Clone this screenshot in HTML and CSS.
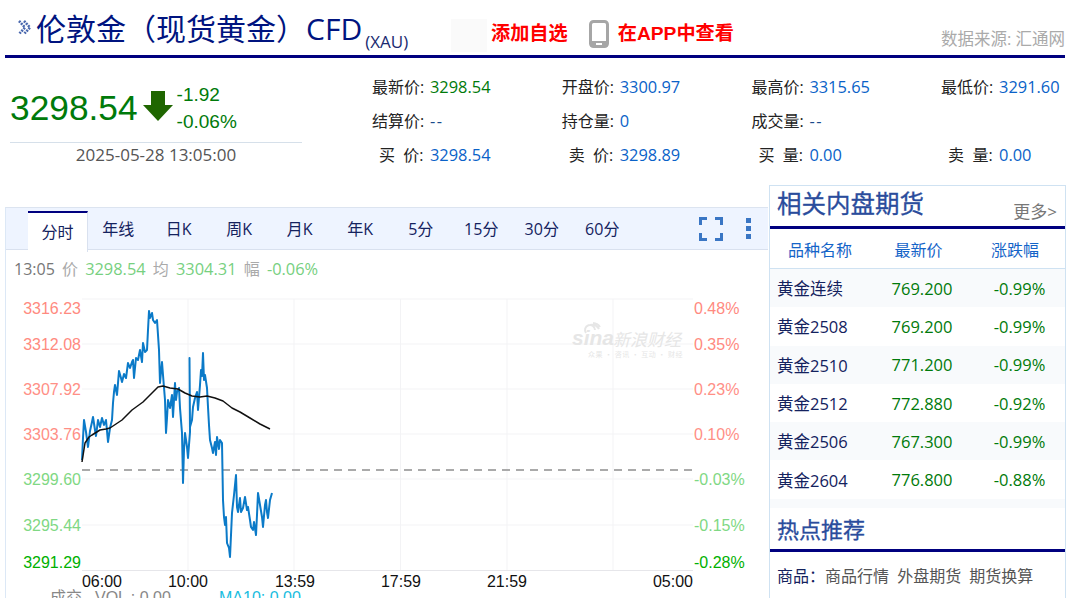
FILE: index.html
```html
<!doctype html>
<html>
<head>
<meta charset="utf-8">
<title>伦敦金（现货黄金）CFD</title>
<link rel="stylesheet" href="styles.css">
</head>
<body>
<div class="page">
    <div class="head">
        <svg class="head-mark" width="15" height="15" viewBox="0 0 15 15">
            <path d="M1 1l6 6.500l-6 6.500M6 1l6 6.500l-6 6.500" fill="none" stroke="#4a68ae" stroke-width="2.600" stroke-dasharray="2 1"/>
        </svg>
        <h1>伦敦金（现货黄金）CFD<small>(XAU)</small></h1>
        <div class="head-blank"></div>
        <a class="head-link">添加自选</a>
        <svg class="head-phone" width="20" height="28" viewBox="0 0 20 28">
            <rect x="1.500" y="1.500" width="17" height="25" rx="3" fill="#fff" stroke="#a6a6a6" stroke-width="3"/>
            <rect x="1" y="21" width="18" height="6" rx="2" fill="#a6a6a6"/>
            <rect x="7" y="23" width="6" height="2" fill="#fff"/>
        </svg>
        <a class="head-link">在APP中查看</a>
        <span class="head-source">数据来源: 汇通网</span>
    </div>

    <div class="quote">
        <div class="hero">
            <div class="hero-top">
                <span class="hero-price">3298.54</span>
                <svg class="hero-arrow" width="32" height="32" viewBox="0 0 32 32">
                    <path d="M9 1h14v14h8L16 31L1 15h8z" fill="#1f6600"/>
                </svg>
                <div class="hero-change">
                    <div>-1.92</div>
                    <div>-0.06%</div>
                </div>
            </div>
            <div class="hero-time">2025-05-28 13:05:00</div>
        </div>
        <div class="fields">
            <div class="field"><label>最新价:</label><b class="green">3298.54</b></div>
            <div class="field"><label>开盘价:</label><b>3300.97</b></div>
            <div class="field"><label>最高价:</label><b>3315.65</b></div>
            <div class="field"><label>最低价:</label><b>3291.60</b></div>
            <div class="field"><label>结算价:</label><b class="dash">--</b></div>
            <div class="field"><label>持仓量:</label><b>0</b></div>
            <div class="field"><label>成交量:</label><b class="dash">--</b></div>
            <div class="field"></div>
            <div class="field"><label class="wide">买&nbsp;&nbsp;价:</label><b>3298.54</b></div>
            <div class="field"><label class="wide">卖&nbsp;&nbsp;价:</label><b>3298.89</b></div>
            <div class="field"><label class="wide">买&nbsp;&nbsp;量:</label><b>0.00</b></div>
            <div class="field"><label class="wide">卖&nbsp;&nbsp;量:</label><b>0.00</b></div>
        </div>
    </div>

    <div class="main">
        <div class="chart-panel">
            <div class="tabs">
                <a class="tab on">分时</a>
                <a class="tab">年线</a>
                <a class="tab">日K</a>
                <a class="tab">周K</a>
                <a class="tab">月K</a>
                <a class="tab">年K</a>
                <a class="tab">5分</a>
                <a class="tab">15分</a>
                <a class="tab">30分</a>
                <a class="tab">60分</a>
                <svg class="tab-full" width="24" height="24" viewBox="0 0 24 24">
                    <path d="M1.500 8V1.500H8M16 1.500h6.500V8M22.500 16v6.500H16M8 22.500H1.500V16" fill="none" stroke="#3a76c4" stroke-width="3"/>
                </svg>
                <svg class="tab-more" width="6" height="22" viewBox="0 0 6 22">
                    <rect y="0" width="5" height="5" fill="#3a76c4"/>
                    <rect y="8" width="5" height="5" fill="#3a76c4"/>
                    <rect y="16" width="5" height="5" fill="#3a76c4"/>
                </svg>
            </div>
            <div class="info">
                <span class="info-time">13:05</span> <span class="info-key">价</span> <span class="info-val">3298.54</span> <span class="info-key">均</span> <span class="info-val">3304.31</span> <span class="info-key">幅</span> <span class="info-val">-0.06%</span>
            </div>
            <svg class="chart" width="762" height="320" viewBox="6 278 762 320">
                <g class="grid">
                    <path d="M82 299H693M82 344H693M82 389H693M82 434H693M82 479H693M82 525H693"/>
                    <path d="M188 299V570M294 299V570M400.500 299V570M507 299V570M613 299V570"/>
                </g>
                <path class="axis" d="M82 570.500H693"/>
                <path class="prev" d="M82 470H693"/>

                <g class="mark">
                    <path class="mark-eye" d="M586 333a5 5 0 1 1 9 -3M590 325a8 8 0 0 1 9 4M593 323a9 9 0 0 1 7 4"/>
                    <text class="mark-en" x="572" y="345">sina</text>
                    <text class="mark-cn" x="613" y="346">新浪财经</text>
                    <text class="mark-sub" x="588" y="357">众果 · 咨讯 · 互动 · 财经</text>
                </g>

                <polyline class="line-price" points="82,460 83,438 84,420 86,432 88,447 90,431 92,422 93,417 95,430 96,436 98,420 100,427 102,418 104,425 106,420 108,442 110,428 112,420 113,403 114,392 115,385 117,395 119,371 121,378 122,382 124,374 126,378 128,363 130,368 132,362 133,360 134,378 136,358 138,360 140,350 141,356 142,362 143,343 145,352 147,350 148,330 149,311 150,318 152,313 153,320 155,323 157,320 158,335 159,350 160,383 161,372 162,362 163,375 165,400 166,433 167,418 168,400 170,408 172,395 173,417 175,383 176,400 177,392 179,388 180,408 182,433 183,483 184,450 185,433 187,447 188,458 190,432 189.500,358 190,427 192,420 193,407 195,398 197,392 198,410 200,385 201,370 202,376 203,353 204,380 205,375 207,388 208,407 209,425 210,440 212,448 213,453 215,442 216,455 217,437 219,449 220,440 222,443 223,500 224,517 225,525 226,517 227,543 229,548 230,557 231,535 232,513 234,495 236,475 237,507 238,512 240,498 241,512 243,508 245,497 247,510 248,507 250,520 251,527 253,530 254,522 256,535 257,515 258,493 260,505 262,517 263,527 265,505 266,500 267,512 268,518 270,500 272,493"/>
                <polyline class="line-avg" points="82,462 85,443 89,437 92,435 100,430 106,429 110,428 116,424 122,420 132,410 143,402 148,397 153,392 158,387 163,386 170,388 178,389 185,393 192,396 200,397 207,396 215,398 223,401 232,408 240,412 250,418 260,424 270,429"/>

                <g class="label">
                    <text class="red-1" x="81" y="314" text-anchor="end">3316.23</text>
                    <text class="red-1" x="81" y="350" text-anchor="end">3312.08</text>
                    <text class="red-2" x="81" y="395" text-anchor="end">3307.92</text>
                    <text class="red-2" x="81" y="440" text-anchor="end">3303.76</text>
                    <text class="grn-1" x="81" y="485" text-anchor="end">3299.60</text>
                    <text class="grn-1" x="81" y="531" text-anchor="end">3295.44</text>
                    <text class="grn-2" x="81" y="568" text-anchor="end">3291.29</text>
                    <text class="red-1" x="694" y="314">0.48%</text>
                    <text class="red-1" x="694" y="350">0.35%</text>
                    <text class="red-2" x="694" y="395">0.23%</text>
                    <text class="red-2" x="694" y="440">0.10%</text>
                    <text class="grn-1" x="694" y="485">-0.03%</text>
                    <text class="grn-1" x="694" y="531">-0.15%</text>
                    <text class="grn-2" x="694" y="568">-0.28%</text>
                    <text x="102" y="587" text-anchor="middle">06:00</text>
                    <text x="188" y="587" text-anchor="middle">10:00</text>
                    <text x="295" y="587" text-anchor="middle">13:59</text>
                    <text x="401" y="587" text-anchor="middle">17:59</text>
                    <text x="507" y="587" text-anchor="middle">21:59</text>
                    <text x="673" y="587" text-anchor="middle">05:00</text>
                </g>
                <g class="vol">
                    <text x="50" y="603">成交</text>
                    <text x="95" y="603">VOL : 0.00</text>
                    <text class="vol-ma" x="219" y="603">MA10: 0.00</text>
                </g>
            </svg>
        </div>

        <div class="side">
            <div class="side-title">
                <h2>相关内盘期货</h2>
                <a class="side-more">更多&gt;</a>
            </div>
            <div class="row row-head">
                <span class="col-name">品种名称</span><span class="col-price">最新价</span><span class="col-pct">涨跌幅</span>
            </div>
            <div class="row odd"><span class="col-name">黄金连续</span><span class="col-price">769.200</span><span class="col-pct">-0.99%</span></div>
            <div class="row"><span class="col-name">黄金2508</span><span class="col-price">769.200</span><span class="col-pct">-0.99%</span></div>
            <div class="row odd"><span class="col-name">黄金2510</span><span class="col-price">771.200</span><span class="col-pct">-0.99%</span></div>
            <div class="row"><span class="col-name">黄金2512</span><span class="col-price">772.880</span><span class="col-pct">-0.92%</span></div>
            <div class="row odd"><span class="col-name">黄金2506</span><span class="col-price">767.300</span><span class="col-pct">-0.99%</span></div>
            <div class="row"><span class="col-name">黄金2604</span><span class="col-price">776.800</span><span class="col-pct">-0.88%</span></div>
            <div class="side-gap"></div>
            <div class="side-title hot">
                <h2>热点推荐</h2>
            </div>
            <div class="hot-links"><span class="hot-key">商品：</span><a>商品行情</a> <a>外盘期货</a> <a>期货换算</a></div>
        </div>
    </div>
</div>
</body>
</html>
```

FILE: styles.css
```css
html, body{
    margin: 0;
    height: 598px;
    overflow: hidden;
    background: #fff;
}
body{
    font-family: "Open Sans", "Noto Sans CJK SC", sans-serif;
    font-size: 16px;
    color: #222;
}
a{
    text-decoration: none;
}
.page{
    width: 1060px;
    margin-left: 5px;
}

/* title bar */
.head{
    display: flex;
    align-items: flex-start;
    height: 55px;
    border-bottom: 3px solid #00007f;
    position: relative;
}
.head-mark{
    margin: 20px 3px 0 13px;
}
.head h1{
    margin: 9px 0 0 0;
    width: 415px;
    font-size: 30px;
    font-weight: 400;
    line-height: 40px;
    white-space: nowrap;
    color: #00147f;
}
.head h1 small{
    font-size: 17px;
    color: #1a2a70;
    vertical-align: -8px;
    line-height: 0;
    margin-left: 3px;
}
.head-blank{
    width: 36px;
    height: 33px;
    margin-top: 19px;
    background: #fafafa;
}
.head-link{
    margin: 21px 0 0 4px;
    font-family: "Liberation Sans", "Noto Sans CJK SC", sans-serif;
    font-size: 19.200px;
    font-weight: 700;
    line-height: 26px;
    color: #f00;
    white-space: nowrap;
}
.head-phone{
    margin: 20px 5px 0 21px;
}
.head-source{
    margin: 28px 0 0 auto;
    font-size: 16.500px;
    line-height: 22px;
    color: #aaa;
    white-space: nowrap;
}

/* price block */
.quote{
    display: flex;
    height: 127px;
}
.hero{
    width: 292px;
    flex: none;
    margin-left: 5px;
}
.hero-top{
    display: flex;
    align-items: center;
    height: 75px;
    padding-top: 9px;
    border-bottom: 1px solid #d6e0ea;
}
.hero-price{
    font-family: "Liberation Sans", sans-serif;
    font-size: 35.300px;
    color: #007a0a;
    margin-top: 7px;
}
.hero-arrow{
    margin: 2px 0 0 4px;
}
.hero-change{
    margin: 7px 0 0 3px;
    font-family: "Liberation Sans", sans-serif;
    font-size: 19px;
    line-height: 27px;
    color: #007a0a;
}
.hero-time{
    text-align: center;
    line-height: 24px;
    color: #555;
    font-size: 17px;
}
.fields{
    display: grid;
    grid-template-columns: repeat(4, 189.700px);
    grid-auto-rows: 34px;
    margin: 11px 0 0 70px;
}
.field{
    display: flex;
    align-items: center;
    white-space: nowrap;
}
.field label{
    width: 58px;
    flex: none;
    color: #222;
}
.field label.wide{
    padding-left: 7px;
    width: 51px;
}
.field b{
    font-weight: 400;
    font-size: 16.400px;
    color: #0a62c8;
}
.field b.green{
    color: #007a0a;
}
.field b.dash{
    color: #1a4a8a;
    letter-spacing: 1.500px;
}

/* chart */
.main{
    display: flex;
    align-items: flex-start;
}
.chart-panel{
    width: 762px;
    flex: none;
    margin-top: 22px;
    border-left: 1px solid #dce8f6;
    border-top: 1px solid #dce4f0;
}
.tabs{
    display: flex;
    height: 41px;
    padding-left: 22px;
    background: #eef4ff;
    border-bottom: 1px solid #d9e1ef;
}
.tab{
    width: 60.500px;
    flex: none;
    text-align: center;
    line-height: 42px;
    color: #14225e;
    white-space: nowrap;
}
.tab.on{
    width: 59px;
    height: 38px;
    margin-top: 3px;
    margin-bottom: -1px;
    padding-top: 1px;
    background: #fff;
    border-top: 2px solid #00007f;
    border-right: 1px solid #d9e1ef;
    line-height: 36px;
}
.tab-full{
    margin: 9px 0 0 auto;
}
.tab-more{
    margin: 10px 16px 0 23px;
}
.info{
    height: 23px;
    padding: 5px 0 0 8px;
    line-height: 27px;
    white-space: nowrap;
    word-spacing: 3px;
}
.info-time{
    color: #777;
}
.info-key{
    color: #aaa;
}
.info-val{
    color: #77d07f;
    font-size: 16.400px;
}
.chart{
    display: block;
}
.grid path{
    fill: none;
    stroke: #f3f3f5;
    stroke-width: 1;
}
.axis{
    fill: none;
    stroke: #e6e6ea;
    stroke-width: 1;
}
.prev{
    fill: none;
    stroke: #aaa;
    stroke-width: 2;
    stroke-dasharray: 8 6;
}
.line-price{
    fill: none;
    stroke: #0b7ac8;
    stroke-width: 2;
    stroke-linejoin: round;
}
.line-avg{
    fill: none;
    stroke: #111;
    stroke-width: 1.500;
    stroke-linejoin: round;
}
.label text{
    font-family: "Liberation Sans", sans-serif;
    font-size: 16px;
    fill: #111;
}
.label .red-1{
    fill: #ff8a80;
}
.label .red-2{
    fill: #ff8f86;
}
.label .grn-1{
    fill: #7fd884;
}
.label .grn-2{
    fill: #00b000;
}
.vol text{
    font-family: "Liberation Sans", "Noto Sans CJK SC", sans-serif;
    font-size: 16px;
    fill: #888;
}
.vol .vol-ma{
    fill: #18bde0;
}
.mark{
    fill: #e6e6e6;
}
.mark-eye{
    fill: none;
    stroke: #e6e6e6;
    stroke-width: 2;
}
.mark-en{
    font-family: "Liberation Sans", sans-serif;
    font-size: 21px;
    font-style: italic;
    font-weight: 700;
}
.mark-cn{
    font-family: "Noto Sans CJK SC", sans-serif;
    font-size: 17px;
    font-style: italic;
}
.mark-sub{
    font-family: "Noto Sans CJK SC", sans-serif;
    font-size: 7px;
    letter-spacing: 0.500px;
}

/* right column */
.side{
    width: 295px;
    flex: none;
    margin-left: 1px;
    border: 1px solid #cfe2f2;
    border-bottom: 0;
    height: 420px;
}
.side-title{
    display: flex;
    justify-content: space-between;
    height: 40px;
    border-bottom: 3px solid #00007f;
}
.side-title h2{
    margin: 0 0 0 7px;
    font-size: 24.500px;
    font-weight: 400;
    line-height: 36px;
    color: #2a4c9c;
    -webkit-text-stroke: 0.300px #2a4c9c;
}
.side-more{
    margin: 14px 8px 0 0;
    font-size: 17px;
    color: #777;
    line-height: 24px;
    white-space: nowrap;
}
.row{
    display: flex;
    height: 38.300px;
    align-items: center;
    white-space: nowrap;
    font-size: 16.500px;
}
.row.odd{
    background: #f8fafc;
}
.row-head{
    height: 39px;
    border-bottom: 1px solid #cfe2f2;
    color: #1464c8;
    font-size: 16px;
}
.col-name{
    width: 104px;
    flex: none;
    padding-left: 7px;
    box-sizing: border-box;
    color: #14225e;
}
.col-price{
    width: 96px;
    flex: none;
    text-align: center;
    color: #007a0a;
}
.col-pct{
    width: 95px;
    flex: none;
    box-sizing: border-box;
    padding-left: 4px;
    text-align: center;
    color: #007a0a;
}
.row-head .col-name{
    padding-left: 18px;
    color: inherit;
}
.row-head .col-price{
    padding-right: 7px;
    box-sizing: border-box;
    color: inherit;
}
.row-head .col-pct{
    padding: 0 5px 0 0;
    color: inherit;
}
.side-gap{
    height: 9px;
    background: #f8fafc;
}
.side-title.hot{
    height: 41px;
}
.side-title.hot h2{
    font-size: 22px;
    line-height: 42px;
}
.hot-links{
    padding: 11px 0 0 7px;
    line-height: 26px;
    white-space: nowrap;
    color: #444;
    word-spacing: 4px;
}
.hot-key{
    color: #14225e;
}
.hot-links a{
    color: #555;
}
```
